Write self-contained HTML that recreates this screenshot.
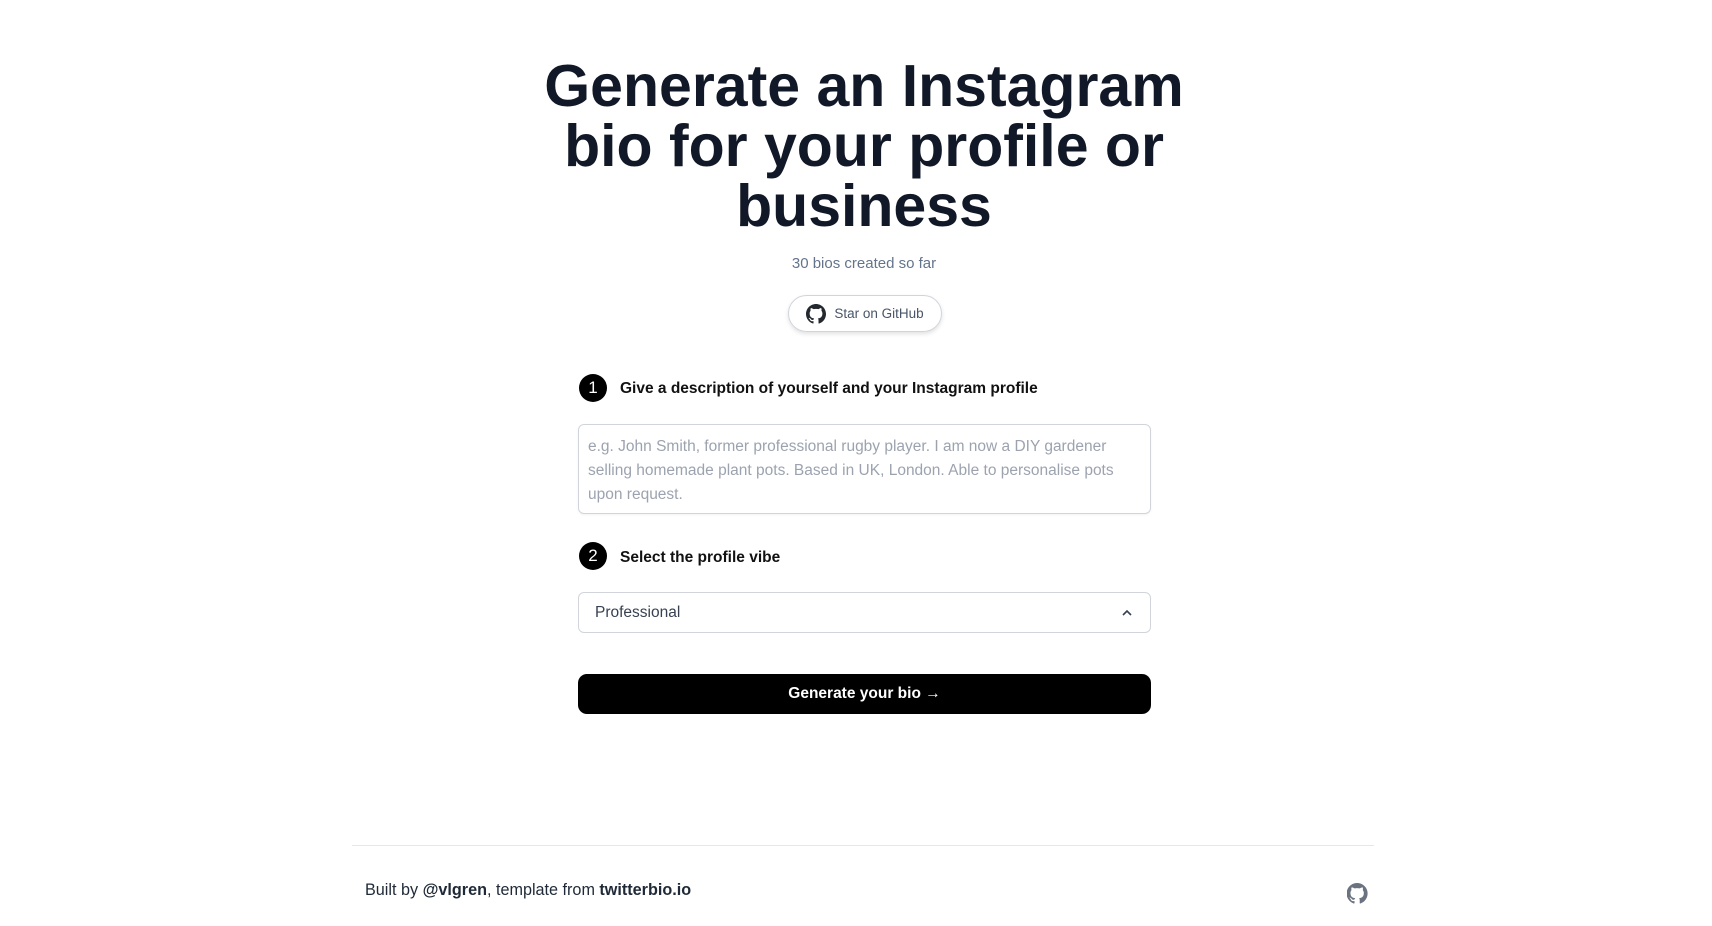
<!DOCTYPE html>
<html><head><meta charset="utf-8"><style>
*{box-sizing:border-box;margin:0;padding:0}
body{width:1712px;height:926px;background:#fff;font-family:"Liberation Sans",sans-serif;position:relative;overflow:hidden;color:#0f172a}
.abs{position:absolute}
h1{position:absolute;left:514px;width:700px;top:56px;text-align:center;font-size:59px;line-height:60px;font-weight:700;color:#111827;letter-spacing:0px}
.sub{left:564px;width:600px;top:255px;text-align:center;color:#64748b;font-size:15px}
.gh{left:788px;top:295px;width:154px;height:37px;border:1px solid #d1d5db;border-radius:19px;box-shadow:0 2px 4px rgba(0,0,0,.12);display:flex;align-items:center;justify-content:center;gap:8px;font-size:13.5px;color:#475569}
.num{width:28px;height:28px;border-radius:50%;background:#000;color:#fff;font-size:17px;display:flex;align-items:center;justify-content:center}
.lab{font-size:15.5px;font-weight:700;color:#111}
.ta{left:578px;top:424px;width:573px;height:90px;border:1px solid #d1d5db;border-radius:6px;padding:10px 30px 10px 9px;color:#9ca3af;font-size:15.5px;line-height:24px;box-shadow:0 1px 2px rgba(0,0,0,.05)}
.sel{left:578px;top:592px;width:573px;height:41px;border:1px solid #d1d5db;border-radius:6px;padding:0 16px;display:flex;align-items:center;justify-content:space-between;font-size:15.5px;color:#374151}
.btn{left:578px;top:674px;width:573px;height:40px;background:#000;border-radius:9px;color:#fff;font-weight:700;font-size:15.5px;display:flex;align-items:center;justify-content:center}
.line{left:352px;top:845px;width:1022px;height:1px;background:#e5e7eb}
.foot{left:365px;top:881px;font-size:16.2px;color:#1f2937}
</style></head><body>
<h1>Generate an Instagram bio for your profile or business</h1>
<div class="abs sub">30 bios created so far</div>
<div class="abs gh"><svg width="20" height="20" viewBox="0 0 16 16"><path fill="#24292f" d="M8 0C3.58 0 0 3.58 0 8c0 3.54 2.29 6.53 5.47 7.59.4.07.55-.17.55-.38 0-.19-.01-.82-.01-1.49-2.01.37-2.53-.49-2.69-.94-.09-.23-.48-.94-.82-1.13-.28-.15-.68-.52-.01-.53.63-.01 1.08.58 1.23.82.72 1.21 1.87.87 2.33.66.07-.52.28-.87.51-1.07-1.78-.2-3.64-.89-3.64-3.95 0-.87.31-1.59.82-2.15-.08-.2-.36-1.02.08-2.12 0 0 .67-.21 2.2.82.64-.18 1.32-.27 2-.27.68 0 1.36.09 2 .27 1.53-1.04 2.2-.82 2.2-.82.44 1.1.16 1.92.08 2.12.51.56.82 1.27.82 2.15 0 3.07-1.87 3.75-3.65 3.95.29.25.54.73.54 1.48 0 1.07-.01 1.93-.01 2.2 0 .21.15.46.55.38A8.013 8.013 0 0016 8c0-4.42-3.58-8-8-8z"/></svg>Star on GitHub</div>
<div class="abs num" style="left:579px;top:374px">1</div>
<div class="abs lab" style="left:620px;top:380px">Give a description of yourself and your Instagram profile</div>
<div class="abs ta">e.g. John Smith, former professional rugby player. I am now a DIY gardener selling homemade plant pots. Based in UK, London. Able to personalise pots upon request.</div>
<div class="abs num" style="left:579px;top:542px">2</div>
<div class="abs lab" style="left:620px;top:549px">Select the profile vibe</div>
<div class="abs sel"><span>Professional</span><svg width="14" height="14" viewBox="0 0 14 14"><path d="M3 9l4-4 4 4" fill="none" stroke="#374151" stroke-width="1.6"/></svg></div>
<div class="abs btn">Generate your bio →</div>
<div class="abs line"></div>
<div class="abs foot">Built by <b>@vlgren</b>, template from <b>twitterbio.io</b></div>
<svg class="abs" style="left:1347px;top:883px" width="21" height="21" viewBox="0 0 16 16"><path fill="#6b7280" d="M8 0C3.58 0 0 3.58 0 8c0 3.54 2.29 6.53 5.47 7.59.4.07.55-.17.55-.38 0-.19-.01-.82-.01-1.49-2.01.37-2.53-.49-2.69-.94-.09-.23-.48-.94-.82-1.13-.28-.15-.68-.52-.01-.53.63-.01 1.08.58 1.23.82.72 1.21 1.87.87 2.33.66.07-.52.28-.87.51-1.07-1.78-.2-3.64-.89-3.64-3.95 0-.87.31-1.59.82-2.15-.08-.2-.36-1.02.08-2.12 0 0 .67-.21 2.2.82.64-.18 1.32-.27 2-.27.68 0 1.36.09 2 .27 1.53-1.04 2.2-.82 2.2-.82.44 1.1.16 1.92.08 2.12.51.56.82 1.27.82 2.15 0 3.07-1.87 3.75-3.65 3.95.29.25.54.73.54 1.48 0 1.07-.01 1.93-.01 2.2 0 .21.15.46.55.38A8.013 8.013 0 0016 8c0-4.42-3.58-8-8-8z" transform="translate(-0.3 0)"/></svg>
</body></html>
